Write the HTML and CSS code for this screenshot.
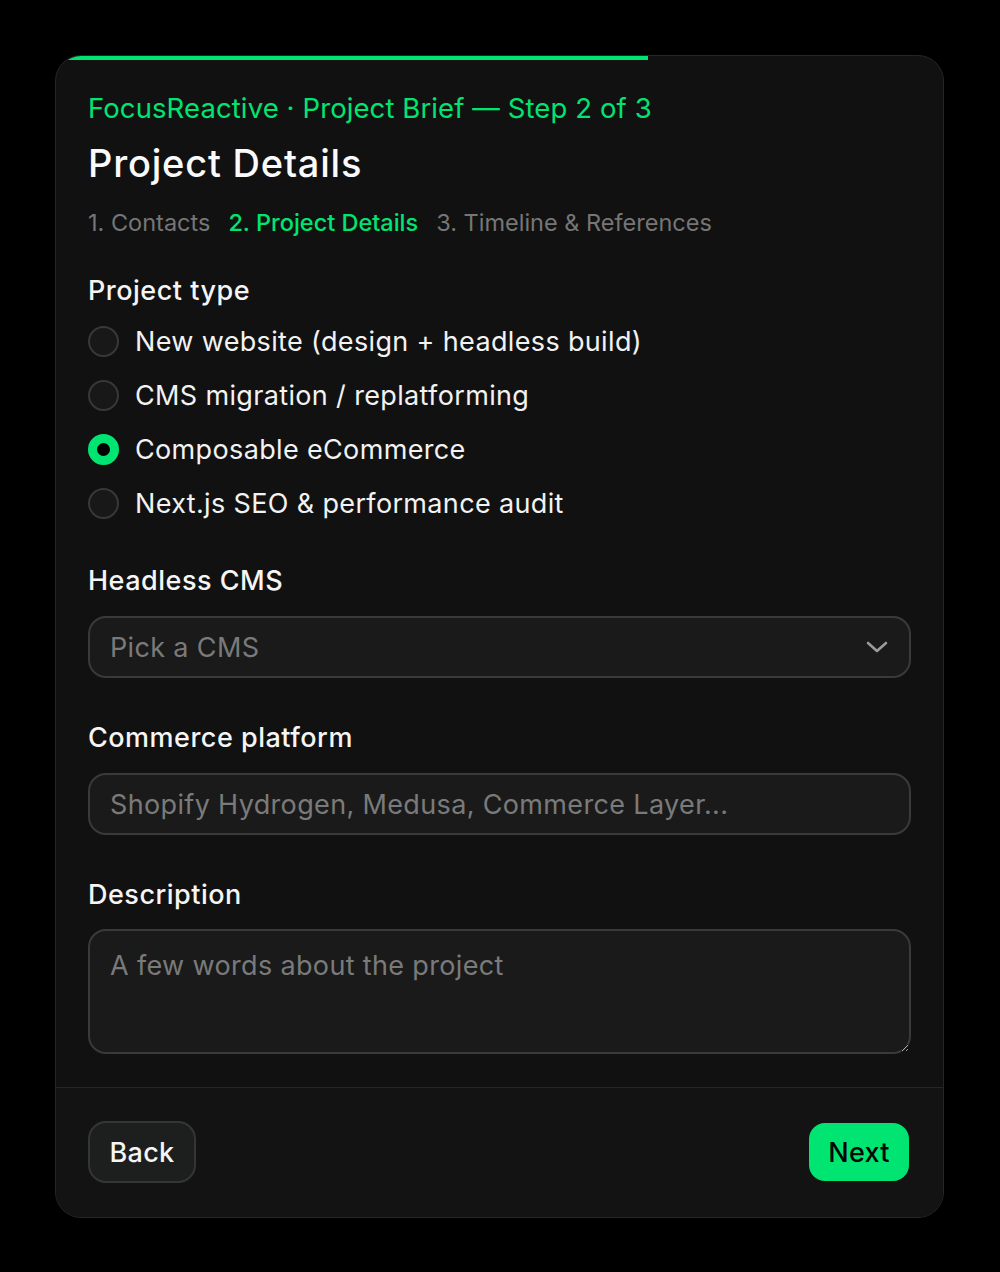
FILE: index.html
```html
<!DOCTYPE html>
<html lang="en">
<head>
<meta charset="utf-8">
<title>Project Details</title>
<link rel="stylesheet" href="styles.css">
</head>
<body>
<div class="card">
  <div class="progress"><div class="progress-fill"></div></div>
  <div class="content">
    <div class="eyebrow">FocusReactive · Project Brief — Step 2 of 3</div>
    <h1 class="title">Project Details</h1>
    <div class="steps">
      <span class="step">1. Contacts</span>
      <span class="step active">2. Project Details</span>
      <span class="step">3. Timeline &amp; References</span>
    </div>

    <div class="field field-type">
      <div class="label">Project type</div>
      <div class="options">
        <label class="option"><span class="radio"></span><span>New website (design + headless build)</span></label>
        <label class="option"><span class="radio"></span><span>CMS migration / replatforming</span></label>
        <label class="option"><span class="radio checked"></span><span>Composable eCommerce</span></label>
        <label class="option"><span class="radio"></span><span>Next.js SEO &amp; performance audit</span></label>
      </div>
    </div>

    <div class="field field-cms">
      <div class="label">Headless CMS</div>
      <div class="control select">
        <span class="placeholder">Pick a CMS</span>
        <svg class="chevron" width="22" height="14" viewBox="0 0 22 14"><path d="M2 3 L11 11 L20 3" fill="none" stroke="#9a9a9a" stroke-width="2.6" stroke-linecap="round" stroke-linejoin="round"/></svg>
      </div>
    </div>

    <div class="field">
      <div class="label">Commerce platform</div>
      <input class="control input" type="text" placeholder="Shopify Hydrogen, Medusa, Commerce Layer...">
    </div>

    <div class="field">
      <div class="label">Description</div>
      <textarea class="control textarea" placeholder="A few words about the project"></textarea>
    </div>
  </div>
  <div class="footer">
    <button class="btn btn-back">Back</button>
    <button class="btn btn-next">Next</button>
  </div>
</div>
</body>
</html>
```

FILE: styles.css
```css
* { box-sizing: border-box; }
html, body { margin: 0; padding: 0; background: #000; }
body {
  font-family: Inter, "Noto Sans", "Liberation Sans", sans-serif;
  color: #f2f2f2;
  padding-top: 55px;
  padding-left: 55px;
  height: 1272px;
}
.card {
  width: 889px;
  background: #111111;
  border: 1px solid #262626;
  border-radius: 26px;
  overflow: hidden;
  display: flex;
  flex-direction: column;
}
.progress { height: 4px; }
.progress-fill { height: 4px; width: 66.7%; background: #00e572; }
.content { padding: 30px 32px 33px; }
.eyebrow {
  color: #00e572;
  font-size: 27.5px;
  line-height: 36px;
  letter-spacing: 0.1px;
}
.title {
  margin: 15px 0 0;
  font-size: 38px;
  line-height: 44px;
  font-weight: 500;
  color: #fafafa;
  letter-spacing: 0.8px;
}
.steps {
  margin-top: 23px;
  display: flex;
  gap: 18px;
  font-size: 23.5px;
  line-height: 30px;
}
.step { color: #767676; }
.step.active { color: #00e572; font-weight: 500; }

.field { margin-top: 43px; }
.field-type { margin-top: 36px; }
.label {
  font-size: 27px;
  line-height: 34px;
  font-weight: 500;
  color: #f5f5f5;
  letter-spacing: 0.5px;
}
.options { margin-top: 6px; display: flex; flex-direction: column; }
.field-cms { margin-top: 34px; }
.option {
  height: 54px;
  display: flex;
  align-items: center;
  gap: 16px;
  font-size: 27px;
  color: #f2f2f2;
  letter-spacing: 0.35px;
}
.radio {
  width: 31px;
  height: 31px;
  border-radius: 50%;
  border: 2px solid #383838;
  background: #181818;
  flex: none;
}
.radio.checked {
  border: 9px solid #00e572;
  background: #000;
}
.control {
  display: block;
  margin-top: 18px;
  width: 100%;
  background: #1a1a1a;
  border: 2px solid #3a3a3a;
  border-radius: 18px;
  font-family: inherit;
  font-size: 27px;
  letter-spacing: 0.35px;
  color: #f2f2f2;
  outline: none;
}
.select {
  height: 62px;
  padding: 0 20px;
  display: flex;
  align-items: center;
  justify-content: space-between;
}
.placeholder { color: #7a7a7a; }
.chevron { margin-right: 1px; }
.input {
  height: 62px;
  padding: 0 20px;
}
.input::placeholder, .textarea::placeholder { color: #7a7a7a; opacity: 1; }
.textarea {
  margin-top: 17px;
  height: 125px;
  padding: 17px 20px;
  line-height: 35px;
  resize: vertical;
}
.footer {
  border-top: 1px solid #262626;
  background: #131313;
  padding: 33px 34px 34px 32px;
  display: flex;
  justify-content: space-between;
  align-items: center;
}
.btn {
  font-family: inherit;
  font-size: 27px;
  font-weight: 500;
  letter-spacing: 0.3px;
  border-radius: 18px;
  cursor: pointer;
}
.btn-back {
  height: 62px;
  width: 108px;
  background: #1d1f1f;
  border: 2px solid #353535;
  color: #f5f5f5;
}
.btn-next {
  height: 58px;
  width: 100px;
  background: #00e572;
  border: none;
  color: #050505;
  border-radius: 16px;
}
```
